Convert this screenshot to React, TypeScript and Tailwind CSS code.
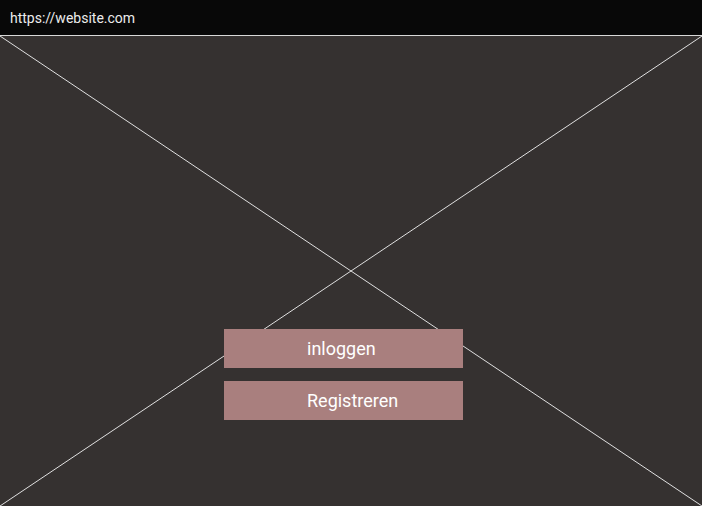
import React from "react";

export default function App() {
  return (
    <div className="w-[702px] h-[506px] bg-[#353130] flex flex-col overflow-hidden" style={{ fontFamily: "Roboto, 'Liberation Sans', sans-serif" }}>
      <div className="h-[36px] bg-[#080808] border-b border-[#d8d8d8] flex items-center pl-[10px] pt-[2px] shrink-0">
        <span className="text-[14px] text-[#ececec]">https://website.com</span>
      </div>
      <div className="relative flex-1">
        <svg className="absolute inset-0 w-full h-full" preserveAspectRatio="none" viewBox="0 0 702 470">
          <line x1="0" y1="0" x2="702" y2="470" stroke="#e0e0e0" strokeWidth="1" />
          <line x1="702" y1="0" x2="0" y2="470" stroke="#e0e0e0" strokeWidth="1" />
        </svg>
        <div className="relative flex flex-col gap-[13px] pt-[293px] pl-[224px]">
          <button className="w-[239px] h-[39px] bg-[#a97f7e] text-white text-[18px] flex items-center pl-[83px]">
            inloggen
          </button>
          <button className="w-[239px] h-[39px] bg-[#a97f7e] text-white text-[18px] flex items-center pl-[83px]">
            Registreren
          </button>
        </div>
      </div>
    </div>
  );
}
